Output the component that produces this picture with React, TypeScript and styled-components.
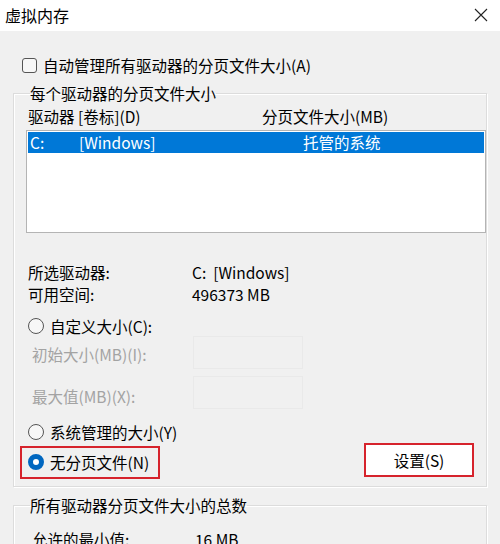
import React from "react";
import styled, { createGlobalStyle } from "styled-components";

const GlobalStyle = createGlobalStyle`
  html, body { margin: 0; padding: 0; background: #f0f0f0; }
  body {
    font-family: "Noto Sans CJK SC", "Microsoft YaHei", "Noto Sans", sans-serif;
    font-size: 15.5px;
    color: #000;
  }
  * { box-sizing: border-box; }
`;

const Window = styled.div`
  width: 500px;
  height: 544px;
  overflow: hidden;
  background: #f0f0f0;
  display: flex;
  flex-direction: column;
`;

const TitleBar = styled.div`
  height: 31px;
  flex: none;
  background: #ffffff;
  display: flex;
  align-items: center;
  justify-content: space-between;
  padding: 0 12px 2px 5px;
`;

const Title = styled.span`
  font-size: 16px;
  line-height: 22px;
  color: #000;
`;

const Body = styled.div`
  padding: 23px 13px 0 13px;
  display: flex;
  flex-direction: column;
`;

const CheckRow = styled.label`
  display: flex;
  align-items: center;
  gap: 6px;
  height: 22px;
  line-height: 22px;
  padding-left: 9px;
`;

const CheckBox = styled.span`
  width: 15px;
  height: 15px;
  border: 1px solid #555;
  border-radius: 3px;
  background: #f7f7f7;
  flex: none;
`;

const Group = styled.fieldset<{ $top: number }>`
  margin: ${(p) => p.$top}px 0 0 0;
  padding: 1px 0 8px 12px;
  border: 1px solid #dcdcdc;
  box-shadow: inset 1px 1px 0 #ffffff, 1px 1px 0 #ffffff;
  min-width: 0;
`;

const Legend = styled.legend`
  padding: 0;
  margin-left: 4px;
  line-height: 22px;
  height: 22px;
`;

const HeaderRow = styled.div`
  display: grid;
  grid-template-columns: 234px 1fr;
  height: 22px;
  line-height: 22px;
  padding-left: 2px;
`;

const ListBox = styled.div`
  margin-top: 3px;
  height: 103px;
  background: #ffffff;
  border: 1px solid #b4b4b4;
  padding: 1px;
`;

const ListRow = styled.div<{ $selected?: boolean }>`
  display: grid;
  grid-template-columns: 49px 224px 1fr;
  height: 21px;
  line-height: 21px;
  padding-left: 2px;
  background: ${(p) => (p.$selected ? "#0078d7" : "transparent")};
  color: ${(p) => (p.$selected ? "#ffffff" : "#000")};
`;

const InfoGrid = styled.div`
  margin-top: 28px;
  display: grid;
  grid-template-columns: 164px 1fr;
  line-height: 22px;
  padding-left: 2px;
`;

const RadioRow = styled.label<{ $mt?: number }>`
  display: flex;
  align-items: center;
  gap: 6px;
  height: 22px;
  line-height: 22px;
  margin-top: ${(p) => p.$mt ?? 0}px;
`;

const Radio = styled.span<{ $checked?: boolean }>`
  width: 16px;
  height: 16px;
  border-radius: 50%;
  flex: none;
  border: ${(p) => (p.$checked ? "5px solid #0067c0" : "1px solid #555")};
  background: ${(p) => (p.$checked ? "#ffffff" : "#f7f7f7")};
`;

const RadioPad = styled.div`
  padding-left: 2px;
`;

const FieldRow = styled.div<{ $mt: number }>`
  display: grid;
  grid-template-columns: 167px 110px;
  align-items: center;
  margin-top: ${(p) => p.$mt}px;
  color: #a3a3a3;
  line-height: 22px;
`;

const FieldLabel = styled.span<{ $dy?: number }>`
  padding-left: 6px;
  position: relative;
  top: ${(p) => p.$dy ?? 0}px;
`;

const FieldBox = styled.div`
  height: 33px;
  border: 1px solid #e9e9e9;
  background: #f0f0f0;
`;

const BottomRow = styled.div`
  display: flex;
  align-items: center;
  justify-content: space-between;
  height: 35px;
  padding-right: 12px;
`;

const Highlight = styled.div`
  margin-left: -6px;
  margin-top: 3px;
  border: 2px solid #d6232c;
  height: 33px;
  width: 140px;
  padding-left: 6px;
  display: flex;
  align-items: center;
`;

const Button = styled.button`
  width: 110px;
  height: 34px;
  background: #ffffff;
  border: 2px solid #d6232c;
  font: inherit;
  color: #000;
  line-height: 22px;
  padding: 0;
  margin-top: -1px;
`;

const TotalRow = styled.div`
  display: grid;
  grid-template-columns: 163px 1fr;
  margin-top: 11px;
  padding-left: 6px;
  line-height: 22px;
`;

const CloseIcon = () => (
  <svg width="14" height="14" viewBox="0 0 14 14" aria-hidden="true">
    <path d="M1 1 L13 13 M13 1 L1 13" stroke="#222" strokeWidth="1.1" fill="none" />
  </svg>
);

export default function App() {
  return (
    <>
      <GlobalStyle />
      <Window>
        <TitleBar>
          <Title>虚拟内存</Title>
          <CloseIcon />
        </TitleBar>
        <Body>
          <CheckRow>
            <CheckBox />
            <span>自动管理所有驱动器的分页文件大小(A)</span>
          </CheckRow>

          <Group $top={6}>
            <Legend>每个驱动器的分页文件大小</Legend>
            <HeaderRow>
              <span>驱动器 [卷标](D)</span>
              <span>分页文件大小(MB)</span>
            </HeaderRow>
            <ListBox>
              <ListRow $selected>
                <span>C:</span>
                <span>[Windows]</span>
                <span>托管的系统</span>
              </ListRow>
            </ListBox>

            <InfoGrid>
              <span>所选驱动器:</span>
              <span>C:&nbsp;&nbsp;[Windows]</span>
              <span>可用空间:</span>
              <span>496373 MB</span>
            </InfoGrid>

            <RadioPad>
              <RadioRow $mt={10}>
                <Radio />
                <span>自定义大小(C):</span>
              </RadioRow>
            </RadioPad>
            <FieldRow $mt={-1}>
              <FieldLabel $dy={1}>初始大小(MB)(I):</FieldLabel>
              <FieldBox />
            </FieldRow>
            <FieldRow $mt={7}>
              <FieldLabel $dy={3}>最大值(MB)(X):</FieldLabel>
              <FieldBox />
            </FieldRow>

            <RadioPad>
              <RadioRow $mt={12}>
                <Radio />
                <span>系统管理的大小(Y)</span>
              </RadioRow>
            </RadioPad>

            <BottomRow>
              <Highlight>
                <RadioRow>
                  <Radio $checked />
                  <span>无分页文件(N)</span>
                </RadioRow>
              </Highlight>
              <Button>设置(S)</Button>
            </BottomRow>
          </Group>

          <Group $top={7}>
            <Legend>所有驱动器分页文件大小的总数</Legend>
            <TotalRow>
              <span>允许的最小值:</span>
              <span>16 MB</span>
            </TotalRow>
          </Group>
        </Body>
      </Window>
    </>
  );
}
